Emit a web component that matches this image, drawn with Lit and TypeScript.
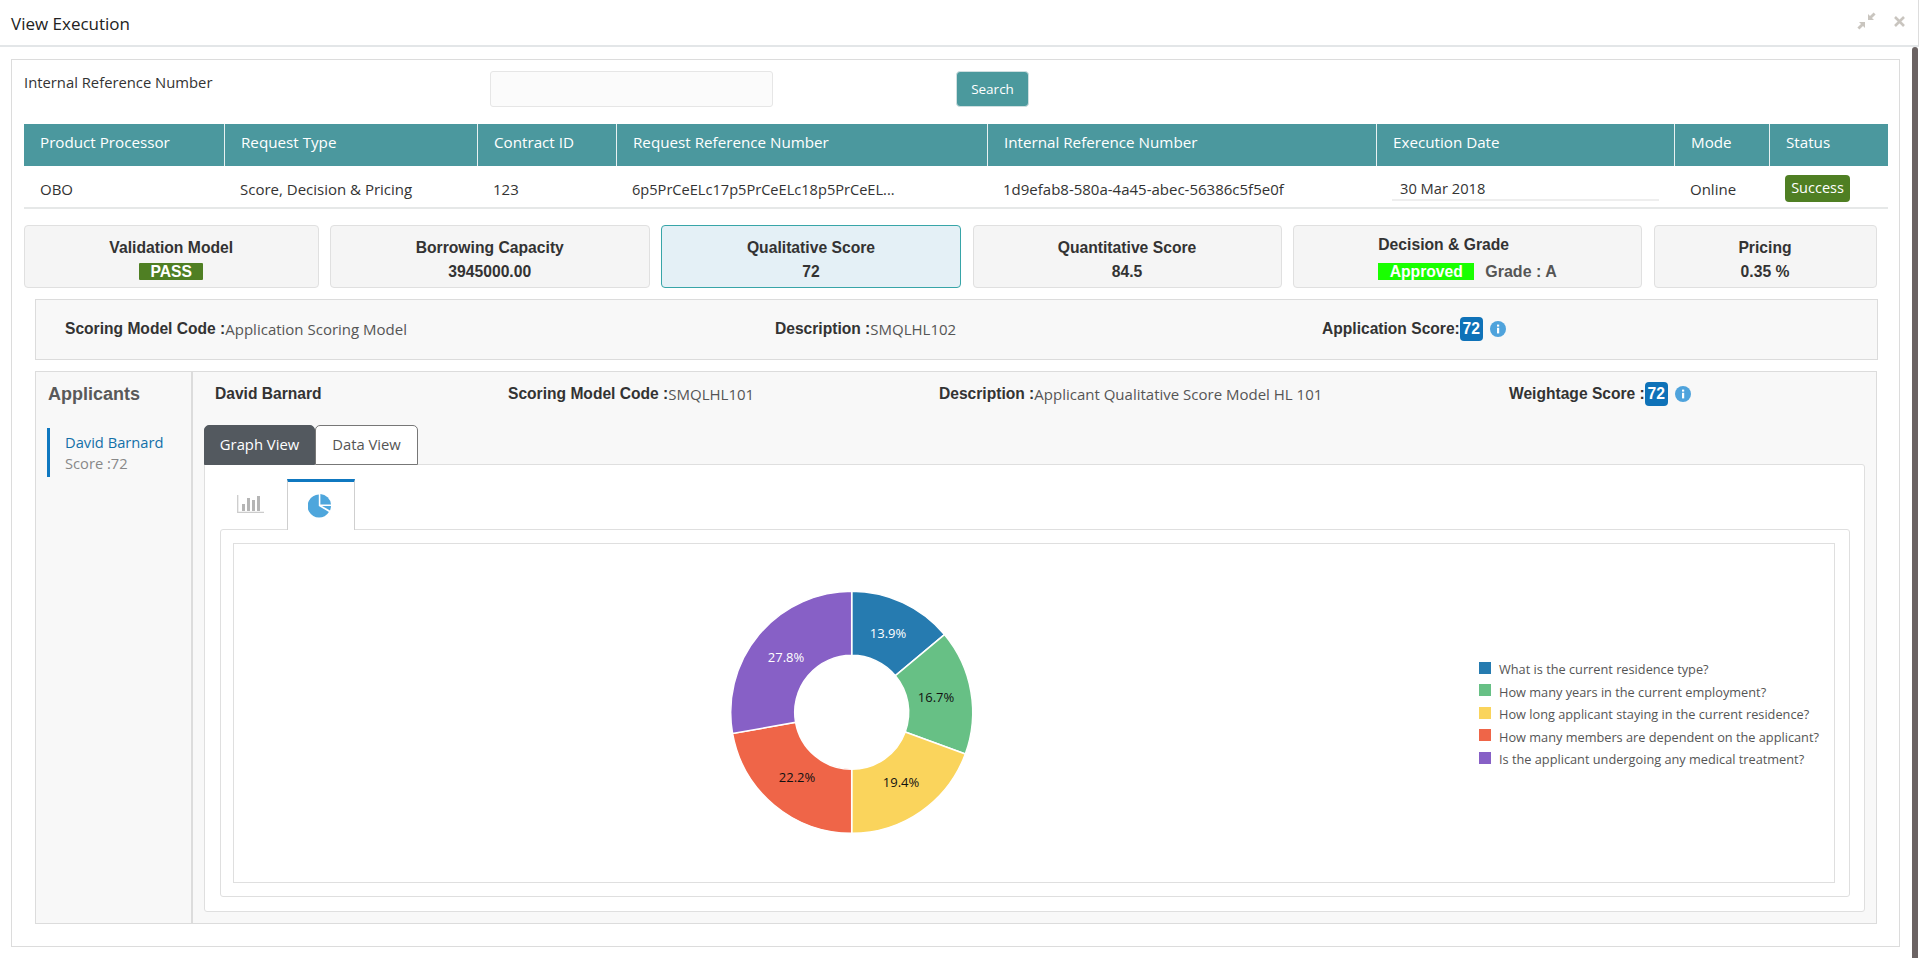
import { LitElement, html, css, svg } from "lit";
import { customElement } from "lit/decorators.js";

const slices = [
  { v: 13.9, c: "#267bb0", t: "What is the current residence type?", lx: 888, ly: 633, tc: "#fff" },
  { v: 16.7, c: "#67c085", t: "How many years in the current employment?", lx: 936, ly: 697, tc: "#111" },
  { v: 19.4, c: "#fad45c", t: "How long applicant staying in the current residence?", lx: 901, ly: 782, tc: "#111" },
  { v: 22.2, c: "#ef6548", t: "How many members are dependent on the applicant?", lx: 797, ly: 777, tc: "#111" },
  { v: 27.8, c: "#8760c6", t: "Is the applicant undergoing any medical treatment?", lx: 786, ly: 657, tc: "#fff" },
];
const cols = [200, 253, 139, 371, 389, 298, 95, 119];
const heads = ["Product Processor", "Request Type", "Contract ID", "Request Reference Number", "Internal Reference Number", "Execution Date", "Mode", "Status"];

function arc(a0: number, a1: number, R: number, r: number, cx: number, cy: number) {
  const p = (a: number, q: number) => `${(cx + q * Math.sin(a)).toFixed(2)} ${(cy - q * Math.cos(a)).toFixed(2)}`;
  const large = a1 - a0 > Math.PI ? 1 : 0;
  return `M${p(a0, R)}A${R} ${R} 0 ${large} 1 ${p(a1, R)}L${p(a1, r)}A${r} ${r} 0 ${large} 0 ${p(a0, r)}Z`;
}

const info = html`<svg class="info" viewBox="0 0 16 16" width="16" height="16"><circle cx="8" cy="8" r="8" fill="#4fa3dc"/><rect x="7" y="6.8" width="2.2" height="5.6" fill="#fff"/><rect x="7" y="3.6" width="2.2" height="2" fill="#fff"/></svg>`;

@customElement("app-root")
export class AppRoot extends LitElement {
  static styles = css`
    :host { display: block; width: 1919px; height: 961px; overflow: hidden; background: #fff; color: #333; font-family: "Open Sans", "Noto Sans", sans-serif; font-size: 15px; }
    * { box-sizing: border-box; }
    .top { height: 47px; border-bottom: 2px solid #e3e6e8; display: flex; align-items: center; padding: 0 12px 2px 11px; border-right: 1px solid #ddd; }
    .title { font-size: 17px; color: #222; flex: 1; margin-top: 3px; }
    .win { display: flex; gap: 17px; align-items: center; margin-top: -1px; }
    .body { display: flex; align-items: stretch; height: 914px; }
    .rail { width: 6px; margin-left: 12px; background: #6b6363; height: 911px; border-radius: 3px 3px 0 0; }
    .panel { margin: 12px 0 0 11px; width: 1889px; height: 888px; border: 1px solid #dcdcdc; padding: 11px 0 0 12px; }
    .filter { display: grid; grid-template-columns: 466px 283px 183px 73px; height: 36px; }
    .filter label { font-size: 14.8px; margin-top: 1px; color: #333; }
    .input { border: 1px solid #e6e6e6; border-radius: 3px; background: #fbfbfb; }
    .btn { background: #4b999d; border: 1px solid #cfdfe0; border-radius: 4px; color: #fff; font-size: 13.5px; display: flex; align-items: center; justify-content: center; }
    .thead, .trow { display: grid; width: 1864px; grid-template-columns: var(--g); }
    .thead { margin-top: 17px; height: 42px; background: #4b989e; color: #fff; font-size: 15.2px; }
    .thead div { padding: 5px 0 0 16px; border-left: 1px solid #e8f1f2; line-height: 26px; white-space: nowrap; }
    .thead div:first-child { border-left: 0; }
    .trow { height: 43px; border-bottom: 2px solid #e6e8e8; align-items: center; font-size: 15px; color: #333; }
    .trow > div { padding-left: 16px; white-space: nowrap; margin-top: 5px; }
    .trow > div.rf { font-size: 14.6px; }
    .trow > div.sc { margin-top: 3px; }
    .trow > div.dc { padding-left: 0; margin-top: 5px; }
    .dt { margin: 0 15px 0 16px; border-bottom: 2px solid #eee; padding: 0 0 1px 8px; height: 23px; line-height: 20px; font-size: 14.7px; }
    .ok { display: inline-block; width: 65px; height: 27px; line-height: 25px; background: #4f7f23; color: #fff; border-radius: 4px; text-align: center; font-size: 14.5px; }
    .cards { display: grid; grid-template-columns: 294.5px 319.5px 300px 309px 349px 223px; column-gap: 11.5px; width: 1853px; margin-top: 16px; height: 63px; }
    .card { border: 1px solid #e0e0e0; border-radius: 4px; background: #f5f5f5; display: flex; flex-direction: column; align-items: center; font-family: "Liberation Sans", Arial, sans-serif; font-weight: 700; font-size: 15.7px; color: #333; padding-top: 13px; line-height: 17px; }
    .card .v { margin-top: 7px; display: flex; align-items: center; height: 17px; }
    .card.on { background: #e4f0f6; border-color: #37a5a8; }
    .card.dec { padding-top: 10px; }
    .card.dec .in { display: flex; flex-direction: column; align-items: flex-start; }
    .card.dec .v { margin-top: 10px; color: #555; font-size: 16px; }
    .pass { background: #4f7f23; color: #fff; width: 64px; height: 17px; line-height: 17px; text-align: center; font-size: 15.7px; border-radius: 1px; }
    .appr { background: #19ff00; color: #fff; width: 96px; height: 17px; line-height: 17px; text-align: center; margin-right: 11px; font-size: 15.7px; }
    .bar { display: grid; grid-template-columns: 710px 547px 1fr; align-items: center; margin: 11px 0 0 11px; width: 1843px; height: 61px; border: 1px solid #dcdcdc; background: #f8f8f8; padding: 0 0 2px 29px; font-size: 15px; color: #555; }
    .k { font-family: "Liberation Sans", Arial, sans-serif; font-weight: 700; font-size: 15.6px; color: #333; }
    .f { display: flex; align-items: center; white-space: pre; }
    .num { background: #0f72b8; color: #fff; border-radius: 4px; width: 23px; height: 24px; line-height: 24px; text-align: center; font-family: "Liberation Sans", Arial, sans-serif; font-weight: 700; font-size: 15.7px; margin-right: 7px; }
    .wrap { display: flex; margin: 11px 0 0 11px; width: 1842px; height: 553px; border: 1px solid #dcdcdc; background: #f8f8f8; }
    .side { width: 157px; border-right: 2px solid #dcdcdc; padding: 10px 0 0 11px; flex: none; }
    .side h3 { margin: 0 0 0 1px; font-family: "Liberation Sans", Arial, sans-serif; font-size: 18px; font-weight: 700; color: #595959; line-height: 24px; }
    .app { margin-top: 22px; border-left: 3px solid #0f78c0; height: 49px; padding: 4px 0 0 15px; line-height: 21px; font-size: 14.7px; }
    .app .n { color: #1470a8; }
    .app .s { color: #888; }
    .main { flex: 1; padding: 0 11px 11px 11px; display: flex; flex-direction: column; min-width: 0; }
    .hd { display: grid; grid-template-columns: 293px 431px 570px 1fr; height: 41px; align-items: center; margin-top: 1px; padding-left: 11px; font-size: 15px; color: #555; }
    .vt { display: flex; margin-top: 11px; height: 40px; position: relative; z-index: 1; }
    .vt div { height: 40px; border: 1px solid #777; border-radius: 5px 5px 0 0; display: flex; align-items: center; justify-content: center; font-size: 14.8px; padding-bottom: 3px; }
    .vt .a { width: 111px; background: #53595f; color: #fff; border-color: #53595f; }
    .vt .b { width: 103px; background: #fff; color: #555; }
    .pane { flex: 1; background: #fff; border: 1px solid #dfdfdf; border-radius: 0 3px 3px 3px; margin-top: -1px; padding: 14px 14px 14px 15px; display: flex; flex-direction: column; min-height: 0; }
    .ct { display: flex; height: 51px; position: relative; z-index: 1; flex: none; }
    .ct div { display: flex; align-items: center; justify-content: center; }
    .ct .x { width: 67px; padding: 0 7px 2px 0; }
    .ct .y { width: 68px; background: #fff; border: 1px solid #cfcfcf; border-top: 3px solid #0f78c0; border-bottom: 0; padding-right: 3px; }
    .sub { flex: 1; border: 1px solid #dfdfdf; border-radius: 3px; margin-top: -1px; padding: 13px 14px 13px 12px; display: flex; min-height: 0; }
    .chart { flex: 1; border: 1px solid #dfdfdf; display: flex; align-items: flex-start; }
    .donut { display: block; flex: none; }
    .legend { margin: 114px 0 0 0; font-size: 12.75px; color: #555; line-height: 22.5px; }
    .legend .r { display: flex; align-items: center; gap: 8px; white-space: nowrap; height: 22.5px; }
    .legend .sw { width: 12px; height: 12px; flex: none; margin-top: -3px; }
  `;

  render() {
    const g = `--g:${cols.map((c) => c + "px").join(" ")}`;
    const CX = 851.7 - 234;
    const CY = 712.3 - 544;
    let a = 0;
    const paths = slices.map((s) => {
      const a0 = a;
      a += (s.v / 100) * Math.PI * 2;
      return svg`<path d=${arc(a0, a, 121, 57, CX, CY)} fill=${s.c} stroke="#fff" stroke-width="1.5"/>`;
    });
    return html`
      <div class="top">
        <div class="title">View Execution</div>
        <div class="win">
          <svg width="19" height="18" viewBox="0 0 19 18"><g fill="#c9c5bf"><path d="M11 2v6h6l-2-2 3.6-3.4-2-2L13 4z"/><path d="M8 16v-6H2l2 2L.4 15.4l2 2L6 14z"/></g></svg>
          <svg width="13" height="13" viewBox="0 0 13 13"><path d="M2 2l9 9M11 2l-9 9" stroke="#c9c5bf" stroke-width="2.6" fill="none"/></svg>
        </div>
      </div>
      <div class="body">
        <div class="panel">
          <div class="filter">
            <label>Internal Reference Number</label>
            <div class="input"></div>
            <div></div>
            <div class="btn">Search</div>
          </div>
          <div class="thead" style=${g}>${heads.map((h) => html`<div>${h}</div>`)}</div>
          <div class="trow" style=${g}>
            <div>OBO</div><div>Score, Decision &amp; Pricing</div><div>123</div>
            <div class="rf">6p5PrCeELc17p5PrCeELc18p5PrCeEL...</div>
            <div>1d9efab8-580a-4a45-abec-56386c5f5e0f</div>
            <div class="dc"><div class="dt">30 Mar 2018</div></div>
            <div>Online</div>
            <div class="sc"><span class="ok">Success</span></div>
          </div>
          <div class="cards">
            <div class="card"><div>Validation Model</div><div class="v"><span class="pass">PASS</span></div></div>
            <div class="card"><div>Borrowing Capacity</div><div class="v">3945000.00</div></div>
            <div class="card on"><div>Qualitative Score</div><div class="v">72</div></div>
            <div class="card"><div>Quantitative Score</div><div class="v">84.5</div></div>
            <div class="card dec"><div class="in"><div>Decision &amp; Grade</div><div class="v"><span class="appr">Approved</span>Grade : A</div></div></div>
            <div class="card"><div>Pricing</div><div class="v">0.35 %</div></div>
          </div>
          <div class="bar">
            <div class="f"><span class="k">Scoring Model Code :</span>Application Scoring Model</div>
            <div class="f"><span class="k">Description :</span>SMQLHL102</div>
            <div class="f"><span class="k">Application Score:</span><span class="num">72</span>${info}</div>
          </div>
          <div class="wrap">
            <div class="side">
              <h3>Applicants</h3>
              <div class="app"><div class="n">David Barnard</div><div class="s">Score :72</div></div>
            </div>
            <div class="main">
              <div class="hd">
                <div class="k">David Barnard</div>
                <div class="f"><span class="k">Scoring Model Code :</span>SMQLHL101</div>
                <div class="f"><span class="k">Description :</span>Applicant Qualitative Score Model HL 101</div>
                <div class="f"><span class="k">Weightage Score :</span><span class="num">72</span>${info}</div>
              </div>
              <div class="vt"><div class="a">Graph View</div><div class="b">Data View</div></div>
              <div class="pane">
                <div class="ct">
                  <div class="x">
                    <svg width="27" height="18" viewBox="0 0 27 18"><path d="M.7 0v17.3h26.3" fill="none" stroke="#cccccc" stroke-width="1.3"/><g fill="#b5b5b5"><rect x="5" y="9" width="3" height="7"/><rect x="10" y="3" width="3" height="13"/><rect x="15" y="5" width="3" height="11"/><rect x="20" y="1" width="3" height="15"/></g></svg>
                  </div>
                  <div class="y">
                    <svg width="24" height="24" viewBox="0 0 24 24"><path d="M10.8 0.6A11.5 11.5 0 1 0 20.9 18.1L10.8 11.9z" fill="#4ea6dc"/><path d="M12.4 0A11.5 11.5 0 0 1 23 10.4L12.4 10.4z" fill="#4ea6dc"/><path d="M14 12L23 12A11.5 11.5 0 0 1 22 16.4z" fill="#4ea6dc"/></svg>
                  </div>
                </div>
                <div class="sub">
                  <div class="chart">
                    <svg class="donut" width="1245" height="336" viewBox="0 0 1245 336">
                      ${paths}
                      ${slices.map((s) => svg`<text x=${s.lx - 234} y=${s.ly - 544 + 4.5} text-anchor="middle" font-size="13" fill=${s.tc} font-family="Open Sans, Noto Sans, sans-serif">${s.v}%</text>`)}
                    </svg>
                    <div class="legend">
                      ${slices.map((s) => html`<div class="r"><span class="sw" style="background:${s.c}"></span>${s.t}</div>`)}
                    </div>
                  </div>
                </div>
              </div>
            </div>
          </div>
        </div>
        <div class="rail"></div>
      </div>
    `;
  }
}
